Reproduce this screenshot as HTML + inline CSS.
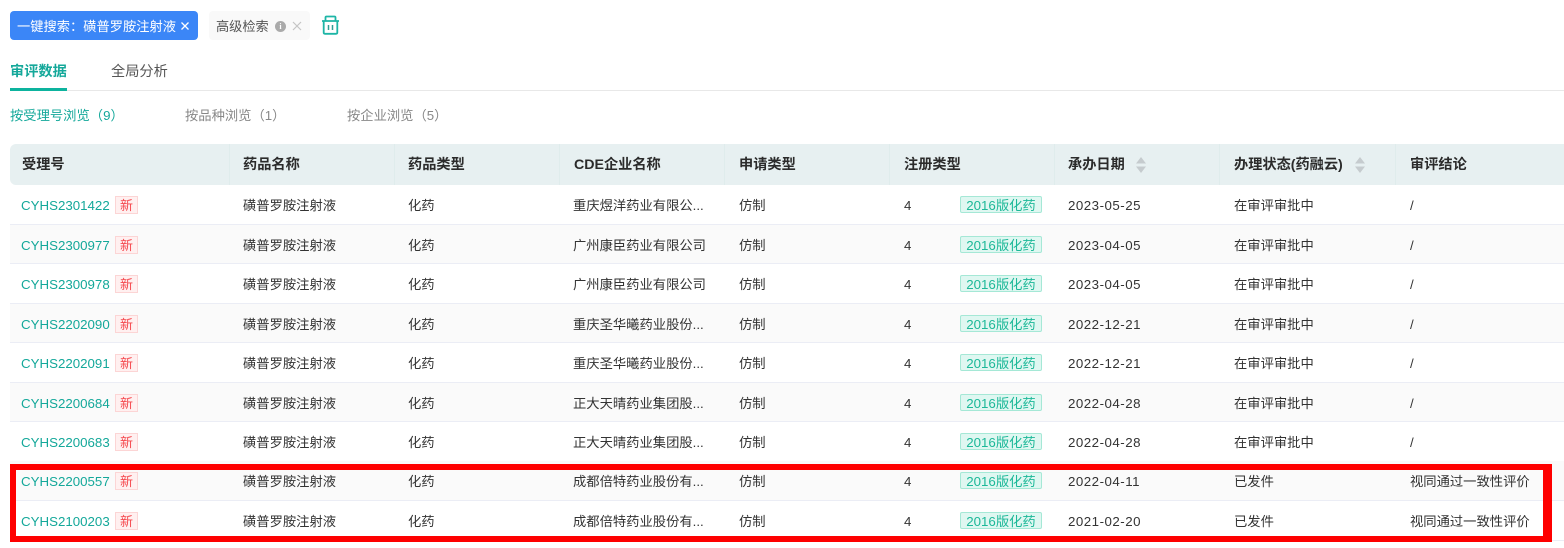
<!DOCTYPE html>
<html lang="zh">
<head>
<meta charset="utf-8">
<style>
html,body{margin:0;padding:0;background:#fff}
body{width:1564px;height:548px;position:relative;overflow:hidden;font-family:"Liberation Sans","Noto Sans CJK SC",sans-serif;font-size:13.3px;color:#333}
.a{position:absolute;white-space:nowrap}
.row{position:absolute;left:10px;width:1554px;height:39px;border-bottom:1px solid #ebedf5}
.row.alt{background:#fafafa}
.row span{position:absolute;top:0;line-height:41px;white-space:nowrap}
.row .id{left:11px;color:#14a89a;font-size:13.3px}
.row .new{left:105px;top:11px;width:23px;height:18px;line-height:17px;text-align:center;background:#fff0f0;border:1px solid #fcd5d5;box-sizing:border-box;color:#f5484d;font-size:13px}
.row .tag{left:950px;top:11px;width:82px;height:17px;line-height:17px;text-align:center;background:#dff7f1;border:1px solid #a5e8d6;box-sizing:border-box;border-radius:2px;color:#1cb898;font-size:13.3px}
.row .d{left:1058px;letter-spacing:.5px}
.th{position:absolute;top:144px;height:41px;line-height:43px;font-weight:bold;font-size:14.2px;color:#2b2b2b;white-space:nowrap}
.div{position:absolute;top:144px;width:1px;height:41px;background:#dfecec}
.sort{position:absolute;top:157px;width:10px;height:16px}
</style>
</head>
<body>
<div class="a" style="left:10px;top:11px;width:188px;height:29px;background:#3b86f7;border-radius:4px"></div>
<div class="a" style="left:17px;top:12px;line-height:30px;color:#fff;font-size:13.25px">一键搜索：磺普罗胺注射液</div>
<svg class="a" style="left:180px;top:21px" width="10" height="10" viewBox="0 0 10 10"><path d="M1.500 1.500L8.500 8.500M8.500 1.500L1.500 8.500" stroke="#fff" stroke-width="1.3"/></svg>
<div class="a" style="left:209px;top:11px;width:101px;height:29px;background:#f9f9f9;border-radius:4px"></div>
<div class="a" style="left:216px;top:12px;line-height:30px;color:#555;font-size:13.2px">高级检索</div>
<div class="a" style="left:275px;top:21px;width:11px;height:11px;border-radius:50%;background:#aaa;color:#fff;font:bold 8px/11px 'Liberation Serif',serif;text-align:center">i</div>
<svg class="a" style="left:292px;top:21px" width="10" height="10" viewBox="0 0 10 10"><path d="M1 1L9 9M9 1L1 9" stroke="#c4c4c4" stroke-width="1.2"/></svg>
<svg class="a" style="left:321px;top:15px" width="19" height="20" viewBox="0 0 19 20" fill="none" stroke="#1db5a6" stroke-width="1.8"><path d="M1 6H18"/><path d="M4.500 6V2.500Q4.500 1.500 5.500 1.500H13.500Q14.500 1.500 14.500 2.500V6"/><path d="M2.700 6V17.500Q2.700 18.800 4 18.800H15Q16.300 18.800 16.300 17.500V6"/><path d="M7.500 10V15M11.500 10V15" stroke="#2f9d94" stroke-width="1.500"/></svg>

<div class="a" style="left:10px;top:62px;line-height:20px;font-size:14.2px;font-weight:bold;color:#14a89a">审评数据</div>
<div class="a" style="left:111px;top:62px;line-height:20px;font-size:14.2px;color:#555">全局分析</div>
<div class="a" style="left:10px;top:90px;width:1554px;height:1px;background:#e8e8e8"></div>
<div class="a" style="left:10px;top:88px;width:57px;height:3px;background:#0db39e"></div>

<div class="a" style="left:10px;top:106px;line-height:20px;color:#14a89a">按受理号浏览（9）</div>
<div class="a" style="left:185px;top:106px;line-height:20px;color:#888">按品种浏览（1）</div>
<div class="a" style="left:347px;top:106px;line-height:20px;color:#888">按企业浏览（5）</div>

<div class="a" style="left:10px;top:144px;width:1554px;height:41px;background:#e7f0f1;border-radius:6px 0 0 6px"></div>
<div class="div" style="left:229px"></div><div class="div" style="left:394px"></div><div class="div" style="left:559px"></div><div class="div" style="left:724px"></div><div class="div" style="left:889px"></div><div class="div" style="left:1054px"></div><div class="div" style="left:1219px"></div><div class="div" style="left:1395px"></div>
<div class="th" style="left:22px">受理号</div>
<div class="th" style="left:243px">药品名称</div>
<div class="th" style="left:408px">药品类型</div>
<div class="th" style="left:574px">CDE企业名称</div>
<div class="th" style="left:739px">申请类型</div>
<div class="th" style="left:904px">注册类型</div>
<div class="th" style="left:1068px">承办日期</div>
<div class="th" style="left:1234px">办理状态(药融云)</div>
<div class="th" style="left:1410px">审评结论</div>
<svg class="sort" style="left:1136px" viewBox="0 0 10 16"><path d="M5 0L10 6.500H0Z M0 9.500H10L5 16Z" fill="#c5cbce"/></svg>
<svg class="sort" style="left:1355px" viewBox="0 0 10 16"><path d="M5 0L10 6.500H0Z M0 9.500H10L5 16Z" fill="#c5cbce"/></svg>

<div class="row" style="top:185px"><span class="id">CYHS2301422</span><span class="new">新</span><span style="left:233px">磺普罗胺注射液</span><span style="left:398px">化药</span><span style="left:563px">重庆煜洋药业有限公...</span><span style="left:729px">仿制</span><span style="left:894px">4</span><span class="tag">2016版化药</span><span class="d">2023-05-25</span><span style="left:1224px">在审评审批中</span><span style="left:1400px">/</span></div>
<div class="row alt" style="top:225px;height:38px"><span class="id">CYHS2300977</span><span class="new">新</span><span style="left:233px">磺普罗胺注射液</span><span style="left:398px">化药</span><span style="left:563px">广州康臣药业有限公司</span><span style="left:729px">仿制</span><span style="left:894px">4</span><span class="tag">2016版化药</span><span class="d">2023-04-05</span><span style="left:1224px">在审评审批中</span><span style="left:1400px">/</span></div>
<div class="row" style="top:264px"><span class="id">CYHS2300978</span><span class="new">新</span><span style="left:233px">磺普罗胺注射液</span><span style="left:398px">化药</span><span style="left:563px">广州康臣药业有限公司</span><span style="left:729px">仿制</span><span style="left:894px">4</span><span class="tag">2016版化药</span><span class="d">2023-04-05</span><span style="left:1224px">在审评审批中</span><span style="left:1400px">/</span></div>
<div class="row alt" style="top:304px;height:38px"><span class="id">CYHS2202090</span><span class="new">新</span><span style="left:233px">磺普罗胺注射液</span><span style="left:398px">化药</span><span style="left:563px">重庆圣华曦药业股份...</span><span style="left:729px">仿制</span><span style="left:894px">4</span><span class="tag">2016版化药</span><span class="d">2022-12-21</span><span style="left:1224px">在审评审批中</span><span style="left:1400px">/</span></div>
<div class="row" style="top:343px"><span class="id">CYHS2202091</span><span class="new">新</span><span style="left:233px">磺普罗胺注射液</span><span style="left:398px">化药</span><span style="left:563px">重庆圣华曦药业股份...</span><span style="left:729px">仿制</span><span style="left:894px">4</span><span class="tag">2016版化药</span><span class="d">2022-12-21</span><span style="left:1224px">在审评审批中</span><span style="left:1400px">/</span></div>
<div class="row alt" style="top:383px;height:38px"><span class="id">CYHS2200684</span><span class="new">新</span><span style="left:233px">磺普罗胺注射液</span><span style="left:398px">化药</span><span style="left:563px">正大天晴药业集团股...</span><span style="left:729px">仿制</span><span style="left:894px">4</span><span class="tag">2016版化药</span><span class="d">2022-04-28</span><span style="left:1224px">在审评审批中</span><span style="left:1400px">/</span></div>
<div class="row" style="top:422px"><span class="id">CYHS2200683</span><span class="new">新</span><span style="left:233px">磺普罗胺注射液</span><span style="left:398px">化药</span><span style="left:563px">正大天晴药业集团股...</span><span style="left:729px">仿制</span><span style="left:894px">4</span><span class="tag">2016版化药</span><span class="d">2022-04-28</span><span style="left:1224px">在审评审批中</span><span style="left:1400px">/</span></div>
<div class="row alt" style="top:461px"><span class="id">CYHS2200557</span><span class="new">新</span><span style="left:233px">磺普罗胺注射液</span><span style="left:398px">化药</span><span style="left:563px">成都倍特药业股份有...</span><span style="left:729px">仿制</span><span style="left:894px">4</span><span class="tag">2016版化药</span><span class="d">2022-04-11</span><span style="left:1224px">已发件</span><span style="left:1400px">视同通过一致性评价</span></div>
<div class="row" style="top:501px"><span class="id">CYHS2100203</span><span class="new">新</span><span style="left:233px">磺普罗胺注射液</span><span style="left:398px">化药</span><span style="left:563px">成都倍特药业股份有...</span><span style="left:729px">仿制</span><span style="left:894px">4</span><span class="tag">2016版化药</span><span class="d">2021-02-20</span><span style="left:1224px">已发件</span><span style="left:1400px">视同通过一致性评价</span></div>

<div class="a" style="left:10px;top:464px;width:1542px;height:78px;box-sizing:border-box;border:solid #fe0000;border-width:6px 9px 6px 6px"></div>
</body>
</html>
